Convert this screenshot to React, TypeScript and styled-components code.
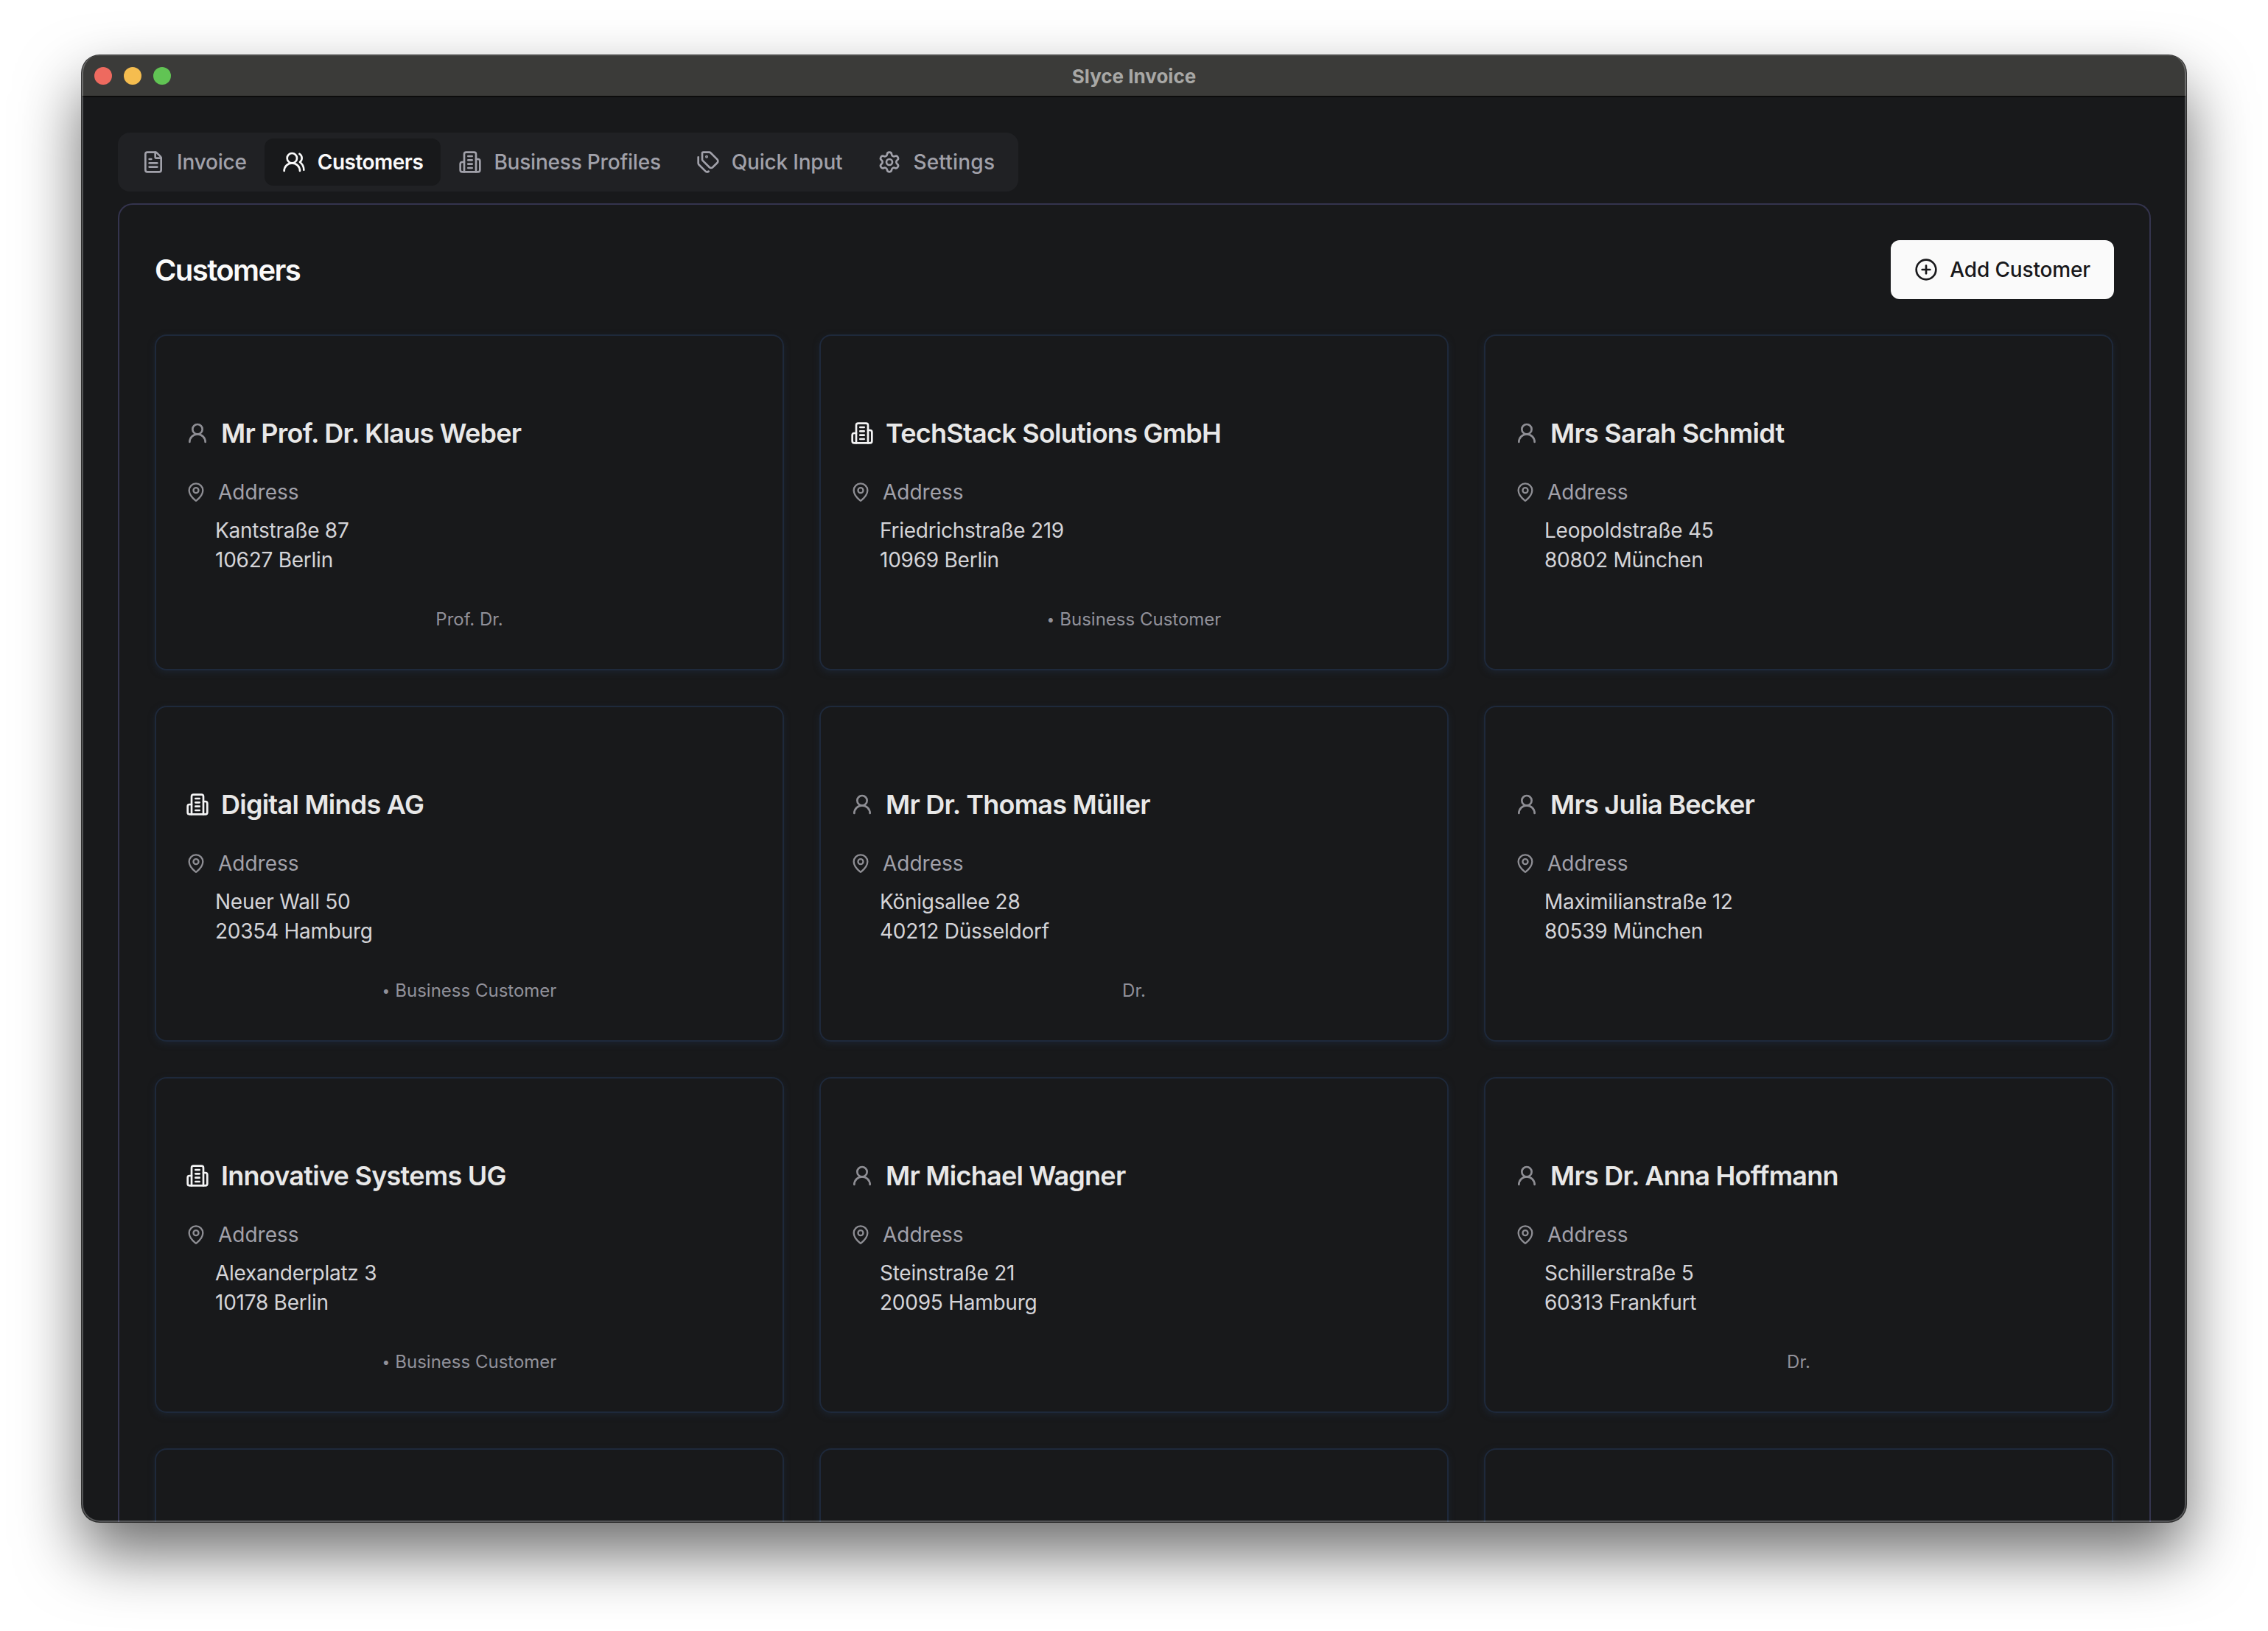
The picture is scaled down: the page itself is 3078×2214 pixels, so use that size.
import * as React from 'react'
import styled, { createGlobalStyle } from 'styled-components'
import {
  CirclePlus,
  FileText,
  MapPin,
  Settings,
  Tags,
  UserRound,
  UsersRound,
} from 'lucide-react'

const GlobalStyle = createGlobalStyle`
  * {
    box-sizing: border-box;
  }
  html, body {
    margin: 0;
    padding: 0;
    background: #fff;
    font-family: Inter, 'Liberation Sans', sans-serif;
    -webkit-font-smoothing: antialiased;
  }
`

const Page = styled.div`
  width: 3078px;
  height: 2214px;
  padding: 75px 111px 148px;
  overflow: hidden;
`

const Window = styled.div`
  position: relative;
  height: 100%;
  display: flex;
  flex-direction: column;
  border-radius: 24px;
  overflow: hidden;
  background: #18191b;
  box-shadow: 0 0 0 1px rgba(0, 0, 0, 0.75), 0 42px 86px rgba(0, 0, 0, 0.58);

  &::after {
    content: '';
    position: absolute;
    inset: 0;
    border: 2px solid rgba(255, 255, 255, 0.26);
    border-top: 0;
    border-radius: 24px;
    pointer-events: none;
  }
`

const TitleBar = styled.div`
  position: relative;
  flex: 0 0 57px;
  display: flex;
  align-items: center;
  justify-content: center;
  background: #3b3b39;
  border-top: 1px solid #4e4e4c;
  border-bottom: 2px solid #0c0c0c;
`

const Lights = styled.div`
  position: absolute;
  left: 17px;
  top: 15px;
  display: flex;
  gap: 16px;
`

const Light = styled.span<{ $color: string }>`
  width: 24px;
  height: 24px;
  border-radius: 50%;
  background: ${p => p.$color};
`

const WindowTitle = styled.span`
  font-size: 26px;
  font-weight: 700;
  color: #a8a8a6;
`

const Content = styled.div`
  flex: 1;
  min-height: 0;
  padding: 48px 48px 0 49px;
  overflow: hidden;
`

const TabList = styled.div`
  display: inline-flex;
  height: 80px;
  padding: 8px;
  border-radius: 16px;
  background: #202124;
`

const Tab = styled.div<{ $active?: boolean }>`
  display: flex;
  align-items: center;
  gap: 16px;
  padding: 0 24px;
  border-radius: 12px;
  font-size: 28px;
  font-weight: ${p => (p.$active ? 600 : 500)};
  letter-spacing: ${p => (p.$active ? '-0.5px' : '-0.2px')};
  color: ${p => (p.$active ? '#fafafa' : '#a1a1aa')};
  background: ${p => (p.$active ? '#18191b' : 'transparent')};

  &:last-child {
    letter-spacing: 0.2px;
  }
`

const Panel = styled.div`
  margin-top: 16px;
  padding: 48px 48px 0;
  border: 2px solid #34344e;
  border-bottom: 0;
  border-radius: 20px 20px 0 0;
  height: 1900px;
`

const PanelHeader = styled.div`
  display: flex;
  align-items: center;
  justify-content: space-between;
`

const PanelTitle = styled.h2`
  margin: 0;
  font-size: 40px;
  font-weight: 600;
  letter-spacing: -1.6px;
  color: #fafafa;
`

const AddButton = styled.button`
  display: flex;
  align-items: center;
  gap: 16px;
  height: 80px;
  padding: 0 32px;
  border: 0;
  border-radius: 12px;
  background: #fafafa;
  color: #18181b;
  font-family: inherit;
  font-size: 28px;
  font-weight: 500;
  letter-spacing: -0.15px;
`

const CardGrid = styled.div`
  display: grid;
  grid-template-columns: repeat(3, 854px);
  grid-auto-rows: 456px;
  gap: 48px;
  margin-top: 48px;
`

const Card = styled.div`
  display: flex;
  flex-direction: column;
  padding: 104px 40px 0;
  border: 2px solid #1e293b;
  border-radius: 16px;
  box-shadow: 0 3px 8px rgba(30, 41, 59, 0.6);
`

const CardTitle = styled.div<{ $company?: boolean }>`
  display: flex;
  align-items: center;
  gap: 16px;
  height: 56px;
  font-size: 36px;
  font-weight: 600;
  letter-spacing: -0.75px;
  color: #e8e8e8;

  svg {
    color: ${p => (p.$company ? '#f4f4f5' : '#8e8e94')};
  }
`

const AddressLabel = styled.div`
  display: flex;
  align-items: center;
  gap: 16px;
  height: 40px;
  margin-top: 32px;
  font-size: 28px;
  color: #a1a1aa;

  svg {
    color: #8e8e94;
  }
`

const AddressLines = styled.div`
  margin: 12px 0 0 40px;
  font-size: 28px;
  line-height: 40px;
  letter-spacing: -0.25px;
  color: #d4d4d8;
`

const CardFooter = styled.div`
  margin-top: 45px;
  font-size: 24px;
  line-height: 32px;
  text-align: center;
  color: #91919a;
`

const FooterDot = styled.span`
  margin-right: 7px;
  font-size: 19px;
  vertical-align: 1px;
`

const BuildingIcon: React.FC<{ size: number }> = ({ size }) => (
  <svg
    width={size}
    height={size}
    viewBox="0 0 24 24"
    fill="none"
    stroke="currentColor"
    strokeWidth={2}
    strokeLinecap="round"
    strokeLinejoin="round"
  >
    <path d="M6 22V4a2 2 0 0 1 2-2h8a2 2 0 0 1 2 2v18Z" />
    <path d="M6 12H4a2 2 0 0 0-2 2v6a2 2 0 0 0 2 2h2" />
    <path d="M18 9h2a2 2 0 0 1 2 2v9a2 2 0 0 1-2 2h-2" />
    <path d="M10 6h4" />
    <path d="M10 10h4" />
    <path d="M10 14h4" />
    <path d="M10 18h4" />
  </svg>
)

interface ICustomer {
  name: string
  company?: boolean
  street: string
  city: string
  note?: string
}

const customers: ICustomer[] = [
  { name: 'Mr Prof. Dr. Klaus Weber', street: 'Kantstraße 87', city: '10627 Berlin', note: 'Prof. Dr.' },
  { name: 'TechStack Solutions GmbH', company: true, street: 'Friedrichstraße 219', city: '10969 Berlin' },
  { name: 'Mrs Sarah Schmidt', street: 'Leopoldstraße 45', city: '80802 München' },
  { name: 'Digital Minds AG', company: true, street: 'Neuer Wall 50', city: '20354 Hamburg' },
  { name: 'Mr Dr. Thomas Müller', street: 'Königsallee 28', city: '40212 Düsseldorf', note: 'Dr.' },
  { name: 'Mrs Julia Becker', street: 'Maximilianstraße 12', city: '80539 München' },
  { name: 'Innovative Systems UG', company: true, street: 'Alexanderplatz 3', city: '10178 Berlin' },
  { name: 'Mr Michael Wagner', street: 'Steinstraße 21', city: '20095 Hamburg' },
  { name: 'Mrs Dr. Anna Hoffmann', street: 'Schillerstraße 5', city: '60313 Frankfurt', note: 'Dr.' },
]

const tabs = [
  { label: 'Invoice', icon: FileText },
  { label: 'Customers', icon: UsersRound, active: true },
  { label: 'Business Profiles', icon: BuildingIcon },
  { label: 'Quick Input', icon: Tags },
  { label: 'Settings', icon: Settings },
]

const CustomerCard: React.FC<{ customer: ICustomer }> = ({ customer }) => {
  const NameIcon = customer.company ? BuildingIcon : UserRound
  return (
    <Card>
      <CardTitle $company={customer.company}>
        <NameIcon size={32} />
        {customer.name}
      </CardTitle>
      <AddressLabel>
        <MapPin size={28} strokeWidth={2} />
        Address
      </AddressLabel>
      <AddressLines>
        {customer.street}
        <br />
        {customer.city}
      </AddressLines>
      {customer.company && (
        <CardFooter>
          <FooterDot>•</FooterDot>
          Business Customer
        </CardFooter>
      )}
      {customer.note && <CardFooter>{customer.note}</CardFooter>}
    </Card>
  )
}

export default function App() {
  return (
    <Page>
      <GlobalStyle />
      <Window>
        <TitleBar>
          <Lights>
            <Light $color="#ee6a5f" />
            <Light $color="#f5bd4f" />
            <Light $color="#61c454" />
          </Lights>
          <WindowTitle>Slyce Invoice</WindowTitle>
        </TitleBar>
        <Content>
          <TabList>
            {tabs.map(tab => (
              <Tab key={tab.label} $active={tab.active}>
                <tab.icon size={32} />
                {tab.label}
              </Tab>
            ))}
          </TabList>
          <Panel>
            <PanelHeader>
              <PanelTitle>Customers</PanelTitle>
              <AddButton>
                <CirclePlus size={32} strokeWidth={2} />
                Add Customer
              </AddButton>
            </PanelHeader>
            <CardGrid>
              {customers.map(customer => (
                <CustomerCard key={customer.name} customer={customer} />
              ))}
              <Card />
              <Card />
              <Card />
            </CardGrid>
          </Panel>
        </Content>
      </Window>
    </Page>
  )
}
